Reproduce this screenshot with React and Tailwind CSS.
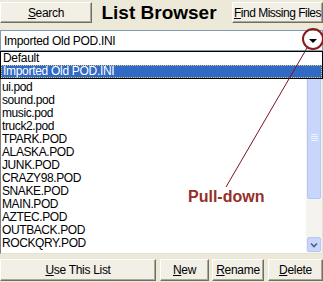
import React from 'react';

const font = { fontFamily: '"Liberation Sans", Arial, sans-serif' };

const Btn = ({ className = '', children }) => (
  <div
    className={`shrink-0 flex items-center justify-center whitespace-nowrap bg-[#f1efe6] border border-t-white border-l-white border-r-[#716f64] border-b-[#716f64] shadow-[inset_-1px_-1px_0_#aca899] text-[12px] text-black ${className}`}
  >
    {children}
  </div>
);

// first two entries are hidden behind the open drop-down
const items = [
  'ui.pod',
  'sound.pod',
  'music.pod',
  'truck2.pod',
  'TPARK.POD',
  'ALASKA.POD',
  'JUNK.POD',
  'CRAZY98.POD',
  'SNAKE.POD',
  'MAIN.POD',
  'AZTEC.POD',
  'OUTBACK.POD',
  'ROCKQRY.POD',
];

export default function App() {
  return (
    <div className="relative w-[323px] h-[282px] bg-[#ece9d8] overflow-hidden" style={font}>
      {/* Header */}
      <div className="flex items-center pt-[2px] h-[23px]">
        <Btn className="w-[92px] h-[21px] tracking-[-0.3px]">
          <span><u>S</u>earch</span>
        </Btn>
        <div className="flex-1 min-w-0 text-center text-[19px] font-bold leading-none whitespace-nowrap pr-[6px]">List Browser</div>
        <Btn className="w-[91px] h-[21px] text-[11.5px] tracking-[-0.5px]">
          <span><u>F</u>ind Missing Files</span>
        </Btn>
      </div>

      {/* Combo box */}
      <div className="relative mt-[7px]">
        <div className="flex items-center h-[21px] bg-white border border-[#7f9db9] pl-[3px] text-[12px] tracking-[-0.3px]">
          <span className="flex-1">Imported Old POD.INI</span>
          <div className="w-[16px] flex justify-center pr-[3px]">
            <div className="w-0 h-0 border-l-[4px] border-r-[4px] border-t-[4px] border-l-transparent border-r-transparent border-t-black" />
          </div>
        </div>

        {/* Drop-down list (overlay) */}
        <div className="absolute top-[21px] left-0 w-[323px] z-10 bg-white border border-black text-[12px] tracking-[-0.3px] leading-[13px]">
          <div className="h-[13px] pl-[2px]">Default</div>
          <div className="h-[13px] pl-[2px] bg-[#316ac5] text-white outline outline-1 outline-dotted outline-[#d8c878] -outline-offset-1">
            Imported Old POD.INI
          </div>
        </div>
      </div>

      {/* List box */}
      <div className="flex h-[203px] bg-white border border-[#808080] border-r-[#e4e2d6] border-b-[#e4e2d6]">
        <div className="flex-1 overflow-hidden pt-[29px] pl-[1px] text-[12px] tracking-[-0.4px] leading-[13px]">
          {items.map((it) => (
            <div key={it} className="h-[13px]">{it}</div>
          ))}
        </div>
        {/* Scrollbar */}
        <div className="w-[16px] flex flex-col bg-[#f4f3ee] pt-[24px]">
          <div className="mx-[1px] h-[123px] rounded-[2px] bg-[#c8d6fb] border border-[#b4c7f5] flex items-center justify-center">
            <div className="flex flex-col gap-[1px]">
              <div className="w-[7px] h-[1px] bg-[#eef2fe]" />
              <div className="w-[7px] h-[1px] bg-[#eef2fe]" />
              <div className="w-[7px] h-[1px] bg-[#eef2fe]" />
              <div className="w-[7px] h-[1px] bg-[#eef2fe]" />
            </div>
          </div>
          <div className="flex-1" />
          <div className="mx-[1px] mb-[1px] h-[15px] rounded-[2px] bg-[#c8d6fb] border border-[#b4c7f5] flex items-center justify-center">
            <svg width="8" height="6" viewBox="0 0 8 6">
              <path d="M1 1.5 L4 4.5 L7 1.5" fill="none" stroke="#4d6185" strokeWidth="1.6" />
            </svg>
          </div>
        </div>
      </div>

      {/* Bottom buttons */}
      <div className="flex mt-[5px] h-[22px] tracking-[-0.3px]">
        <Btn className="w-[156px] h-[22px]">
          <span><u>U</u>se This List</span>
        </Btn>
        <Btn className="ml-[4px] w-[49px] h-[22px]">
          <span><u>N</u>ew</span>
        </Btn>
        <Btn className="ml-[3px] w-[52px] h-[22px]">
          <span><u>R</u>ename</span>
        </Btn>
        <Btn className="ml-[4px] w-[55px] h-[22px]">
          <span><u>D</u>elete</span>
        </Btn>
      </div>

      {/* Annotation */}
      <svg className="absolute inset-0 z-20 pointer-events-none" width="323" height="282">
        <circle cx="313" cy="39" r="10" fill="none" stroke="#8b1a1a" strokeWidth="2" />
        <line x1="307" y1="48" x2="226" y2="187" stroke="#7a1420" strokeWidth="1" />
      </svg>
      <div className="absolute z-20 left-[188px] top-[189px] text-[16px] font-bold text-[#94302a] leading-none">
        Pull-down
      </div>
    </div>
  );
}
